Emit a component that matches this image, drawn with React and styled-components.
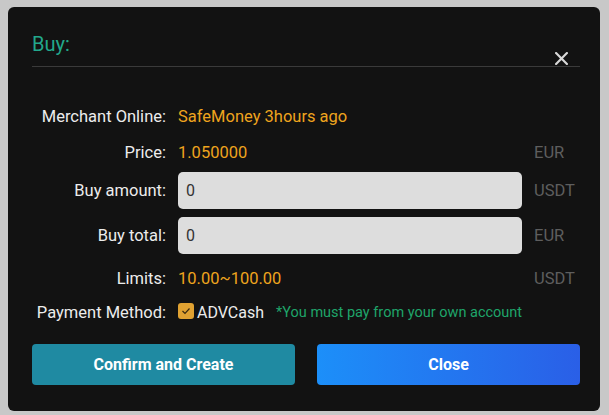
import React from "react";
import styled, { createGlobalStyle } from "styled-components";

const GlobalStyle = createGlobalStyle`
  html, body { margin: 0; padding: 0; background: #c8c8c8; }
  body { font-family: Roboto, "Noto Sans", "Liberation Sans", sans-serif; }
  * { box-sizing: border-box; }
`;

const Page = styled.div`
  width: 609px;
  height: 415px;
  padding: 7px 9px 4px 8px;
  background: #c8c8c8;
`;

const Modal = styled.div`
  position: relative;
  height: 404px;
  background: #121212;
  border-radius: 6px;
  padding: 25px 20px 27px 24px;
  display: flex;
  flex-direction: column;
`;

const Header = styled.div`
  padding-bottom: 10px;
  border-bottom: 1px solid #3a3a3a;
`;

const Title = styled.h2`
  margin: 0;
  font-size: 20px;
  line-height: 24px;
  font-weight: 400;
  color: #22a88c;
`;

const CloseButton = styled.button`
  position: absolute;
  top: 43px;
  right: 31px;
  width: 16px;
  height: 16px;
  padding: 0;
  border: 0;
  background: transparent;
  display: flex;
  align-items: center;
  justify-content: center;
  cursor: pointer;
`;

const Form = styled.div`
  display: flex;
  flex-direction: column;
`;

const Row = styled.div`
  display: grid;
  grid-template-columns: 134px 1fr 46px;
  column-gap: 12px;
  align-items: center;
  height: ${(p) => p.$h || 30}px;
  margin-top: ${(p) => p.$mt}px;
  font-size: 16.5px;
  line-height: 20px;
`;

const Label = styled.div`
  text-align: right;
  color: #ececec;
  white-space: nowrap;
`;

const Value = styled.div`
  display: flex;
  align-items: center;
  gap: 3px;
  min-width: 0;
  color: ${(p) => p.$color || "#ececec"};
  white-space: nowrap;
`;

const Unit = styled.div`
  color: #5e5e5e;
`;

const Input = styled.input`
  width: 100%;
  height: 37px;
  margin: 0;
  padding: 0 8px;
  border: 0;
  border-radius: 5px;
  background: #dddddd;
  font-family: inherit;
  font-size: 16px;
  color: #333;
  outline: none;
`;

const Check = styled.span`
  width: 16px;
  height: 16px;
  border-radius: 3px;
  background: #e0a232;
  display: inline-flex;
  align-items: center;
  justify-content: center;
  margin-top: -4px;
  flex: none;
`;

const PayName = styled.span`
  font-size: 16px;
`;

const Note = styled.span`
  margin-left: 9px;
  font-size: 14.5px;
  color: #1fa56a;
`;

const Buttons = styled.div`
  margin-top: 16px;
  display: grid;
  grid-template-columns: 1fr 1fr;
  column-gap: 22px;
`;

const Button = styled.button`
  height: 41px;
  border: 0;
  border-radius: 4px;
  background: ${(p) =>
    p.$primary
      ? "linear-gradient(90deg, #1c8ff9 0%, #2a5fe7 100%)"
      : "#1f8aa2"};
  color: #fff;
  font-family: inherit;
  font-size: 16px;
  font-weight: 700;
  cursor: pointer;
`;

export default function App() {
  return (
    <>
      <GlobalStyle />
      <Page>
        <Modal>
          <Header>
            <Title>Buy:</Title>
          </Header>
          <CloseButton aria-label="close">
            <svg width="13" height="13" viewBox="0 0 12 12">
              <path d="M1 1L11 11M11 1L1 11" stroke="#d8d8d8" strokeWidth="2" strokeLinecap="round" />
            </svg>
          </CloseButton>
          <Form>
            <Row $mt={35}>
              <Label>Merchant Online:</Label>
              <Value $color="#eea41e">SafeMoney 3hours ago</Value>
              <Unit />
            </Row>
            <Row $mt={6}>
              <Label>Price:</Label>
              <Value $color="#eea41e">1.050000</Value>
              <Unit>EUR</Unit>
            </Row>
            <Row $mt={4} $h={37}>
              <Label>Buy amount:</Label>
              <Value>
                <Input defaultValue="0" />
              </Value>
              <Unit>USDT</Unit>
            </Row>
            <Row $mt={8} $h={37}>
              <Label>Buy total:</Label>
              <Value>
                <Input defaultValue="0" />
              </Value>
              <Unit>EUR</Unit>
            </Row>
            <Row $mt={10}>
              <Label>Limits:</Label>
              <Value $color="#eea41e">10.00~100.00</Value>
              <Unit>USDT</Unit>
            </Row>
            <Row $mt={4}>
              <Label>Payment Method:</Label>
              <Value>
                <Check>
                  <svg width="10" height="8" viewBox="0 0 10 8">
                    <path d="M1.5 4L4 6.5L8.5 1.5" stroke="#3a2a10" strokeWidth="1.2" fill="none" />
                  </svg>
                </Check>
                <PayName>ADVCash</PayName>
                <Note>*You must pay from your own account</Note>
              </Value>
              <Unit />
            </Row>
          </Form>
          <Buttons>
            <Button>Confirm and Create</Button>
            <Button $primary>Close</Button>
          </Buttons>
        </Modal>
      </Page>
    </>
  );
}
